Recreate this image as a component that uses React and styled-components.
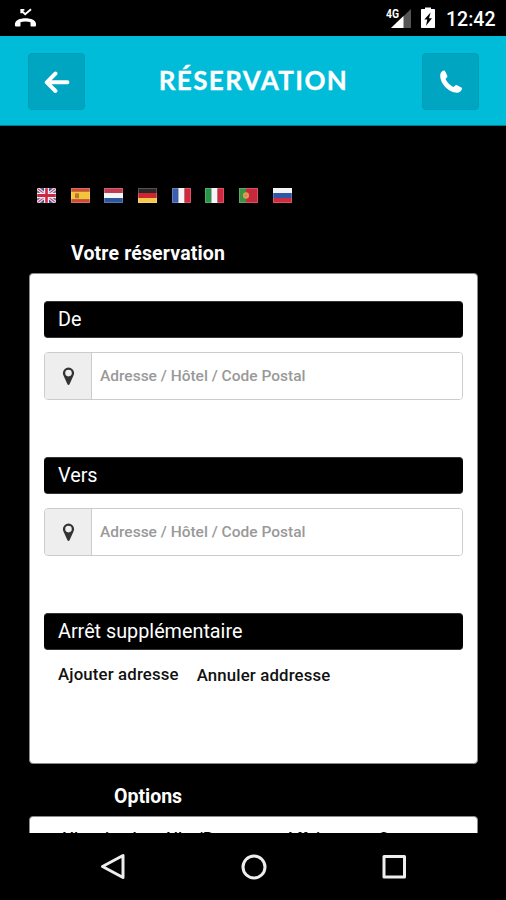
import React from 'react'
import styled, { createGlobalStyle } from 'styled-components'

const GlobalStyle = createGlobalStyle`
  * { box-sizing: border-box; }
  body { margin: 0; background: #000; font-family: Roboto, 'Liberation Sans', sans-serif; }
`

const Screen = styled.div`
  display: flex;
  flex-direction: column;
  width: 506px;
  height: 900px;
  background: #000;
  overflow: hidden;
`

const StatusBar = styled.div`
  display: flex;
  justify-content: space-between;
  height: 36px;
  padding: 0 10px 0 14px;
  color: #fff;
`

const Clock = styled.span`
  margin-left: 3px;
  font-size: 19.5px;
  font-weight: 500;
  line-height: 39px;
  width: 50px;
  white-space: nowrap;
`

const StatusIcons = styled.div`
  display: flex;
  gap: 8px;
`

const Header = styled.header`
  display: flex;
  justify-content: space-between;
  height: 90px;
  padding: 17px 27px 0 28px;
  background: #00bcd9;
  border-bottom: 1px solid #05788a;
`

const Title = styled.h1`
  margin: 0;
  color: #fff;
  font-family: Lato, sans-serif;
  font-size: 26px;
  font-weight: 700;
  line-height: 55px;
  letter-spacing: 1.4px;
  -webkit-text-stroke: 0.3px #fff;
`

const HeaderButton = styled.button`
  display: flex;
  align-items: center;
  justify-content: center;
  width: 57px;
  height: 57px;
  padding: 0;
  border: 1px solid #029db7;
  border-radius: 4px;
  background: #00a5c1;
`

const Content = styled.main`
  flex: none;
  height: 707px;
  padding: 62px 28px 0 29px;
  overflow: hidden;
`

const Flags = styled.div`
  display: flex;
  gap: 14.7px;
  height: 15px;
  padding-left: 8px;

  svg { display: block; }
`

const SectionTitle = styled.h2`
  margin: ${(p) => p.$top}px 0 0;
  padding-left: ${(p) => p.$left}px;
  height: 30px;
  color: #fff;
  font-size: 19.5px;
  font-weight: 700;
  line-height: 32px;
  letter-spacing: ${(p) => p.$spacing || 0}px;
`

const Card = styled.section`
  height: ${(p) => p.$height}px;
  margin-top: ${(p) => p.$top}px;
  padding: ${(p) => p.$pad || 27}px 14px 0 14px;
  background: #fff;
  border: 1px solid #8a8a8a;
  border-radius: 4px;
`

const Group = styled.div`
  height: 156px;
`

const Label = styled.div`
  height: 37px;
  padding-left: 14px;
  border: 1px solid #333;
  border-width: 1px 0;
  border-radius: 4px;
  background: #000;
  color: #fff;
  font-size: 19.8px;
  line-height: 35px;
`

const Field = styled.div`
  display: flex;
  height: 48px;
  margin-top: 14px;
  border: 1px solid #ccc;
  border-radius: 4px;
  overflow: hidden;
`

const Addon = styled.div`
  display: flex;
  align-items: center;
  justify-content: center;
  width: 47px;
  border-right: 1px solid #ccc;
  background: #eee;
`

const Input = styled.input`
  flex: 1;
  min-width: 0;
  padding: 0 8px;
  border: 0;
  background: #fff;
  font-family: inherit;
  font-size: 15.5px;
  font-weight: 500;

  &::placeholder { color: #999; opacity: 1; }
`

const Links = styled.div`
  display: flex;
  gap: 18px;
  padding: 12px 0 0 14px;
`

const TextLink = styled.span`
  padding-top: ${(p) => p.$drop || 0}px;
  color: #111;
  font-size: 16.8px;
  font-weight: 500;
  line-height: 24px;
  letter-spacing: 0.15px;
`

const Options = styled.div`
  display: grid;
  grid-template-columns: 104px 122px 93px 1fr;
  padding-left: 15px;
  font-size: 16.3px;
  font-weight: 500;
  line-height: 24px;
  white-space: nowrap;
`

const NavBar = styled.nav`
  display: flex;
  justify-content: center;
  gap: 112.5px;
  height: 67px;
  padding: 19px 0 0 1px;
`

const MissedCall = () => (
  <svg width="23" height="30" viewBox="0 0 23 30" fill="#fff">
    <path d="M7.3 9.500v3.800M6.400 9.900h4M7 10.300l4.200 4 5.800-5" fill="none" stroke="#fff" strokeWidth="1.900" />
    <path d="M1 25.600C.4 22.900 2 20.700 4 19.800c4.500-2 10.500-2 15 0 2 .9 3.600 3.100 3 5.800-.1.700-.6 1-1.200 1h-3.300c-.6 0-1-.4-1-1v-3.400c-3-1-7-1-10 0v3.400c0 .6-.4 1-1 1H2.200c-.6 0-1.100-.3-1.200-1z" />
  </svg>
)

const Signal = () => (
  <svg width="27" height="36" viewBox="0 0 27 36">
    <path d="M25 9v19H5z" fill="#555" />
    <path d="M17.500 16V28H5z" fill="#fff" />
    <text x="0" y="18" fill="#fff" fontSize="13" fontWeight="700" textLength="13" lengthAdjust="spacingAndGlyphs">4G</text>
  </svg>
)

const Battery = () => (
  <svg width="14" height="36" viewBox="0 0 14 36">
    <path d="M1 9h3V7.500h6V9h3c.6 0 1 .4 1 1v17c0 .6-.4 1-1 1H1c-.6 0-1-.4-1-1V10c0-.6.4-1 1-1z" fill="#fff" />
    <path d="M9.600 12.500L3.300 19.600h3L5 25.800l6-7.500H8z" fill="#000" />
  </svg>
)

const Arrow = () => (
  <svg width="26" height="24" viewBox="0 0 26 24" fill="none" stroke="#fff" strokeWidth="3.900" strokeLinecap="round" strokeLinejoin="round">
    <path d="M11.500 3.500L2.700 12.300l8.800 8.700M3.500 12.300h20" />
  </svg>
)

const Phone = () => (
  <svg width="26" height="26" viewBox="0 0 26 26" fill="#fff">
    <path d="M2.300 5.600C2.600 3.600 4 2.100 5.700 1.600c.7-.2 1.300.1 1.600.8l2 4.300c.3.7.1 1.300-.4 1.800L7.500 9.900c1.700 3.600 4.400 6.300 8 8l1.800-1.500c.5-.4 1.200-.5 1.800-.2l4.200 2.200c.7.400 1 1 .7 1.700-.7 2.200-2.700 3.700-5 3.700C10.500 23.700 1.300 14 2.300 5.600z" />
  </svg>
)

const Pin = () => (
  <svg width="13" height="19" viewBox="0 0 12 18">
    <path fillRule="evenodd" fill="#333" d="M6 .5a5.300 5.300 0 0 1 5.300 5.300c0 1.500-.6 2.600-1.200 3.700L7 16.300c-.4.900-1.600.9-2 0L1.900 9.500C1.300 8.400.7 7.300.7 5.800A5.300 5.300 0 0 1 6 .5zm0 2.200a3.100 3.100 0 1 0 0 6.200 3.100 3.100 0 0 0 0-6.200z" />
  </svg>
)

const flags = [
  { name: 'en', art: (
    <>
      <rect width="19" height="14" fill="#34478f" />
      <path d="M0 0l19 14M19 0L0 14" stroke="#e8e4ee" strokeWidth="3.200" />
      <path d="M0 0l19 14M19 0L0 14" stroke="#c8405a" strokeWidth="1" />
      <path d="M9.500 0v14M0 7h19" stroke="#f4eef2" strokeWidth="5" />
      <path d="M9.500 0v14M0 7h19" stroke="#cf2643" strokeWidth="2.600" />
    </>
  ) },
  { name: 'es', rows: ['#cf4a36', '#f4c23d', '#f4c23d', '#cf4a36'], art: (
    <>
      <rect y="3.500" width="19" height="7" fill="#f4c23d" />
      <rect x="4" y="5" width="4" height="4.500" fill="#b9762f" />
    </>
  ) },
  { name: 'nl', rows: ['#c03a50', '#f5f5f5', '#2c559b'] },
  { name: 'de', rows: ['#2b2626', '#cc2630', '#f3c84b'] },
  { name: 'fr', cols: ['#3a5fae', '#f6f6f6', '#d3263f'] },
  { name: 'it', cols: ['#259546', '#f6f6f6', '#d3263f'] },
  { name: 'pt', art: (
    <>
      <rect width="19" height="14" fill="#c8283c" />
      <rect width="7" height="14" fill="#3c9143" />
      <circle cx="7" cy="7" r="3" fill="#d7a548" />
      <circle cx="7" cy="7" r="1.400" fill="#d98080" />
    </>
  ) },
  { name: 'ru', rows: ['#f4f4f4', '#2f57a5', '#cf2a3e'] },
]

const Flag = ({ rows, cols, art }) => (
  <svg width="19" height="15" viewBox="0 0 19 14" preserveAspectRatio="none">
    {rows && rows.map((c, i) => <rect key={i} y={(i * 14) / rows.length} width="19" height={14 / rows.length} fill={c} />)}
    {cols && cols.map((c, i) => <rect key={i} x={(i * 19) / 3} width={19 / 3} height="14" fill={c} />)}
    {art}
    <rect x=".5" y=".5" width="18" height="13" fill="none" stroke="#fff" strokeOpacity=".2" />
  </svg>
)

const AddressField = () => (
  <Field>
    <Addon><Pin /></Addon>
    <Input placeholder="Adresse / Hôtel / Code Postal" />
  </Field>
)

const App = () => (
  <>
    <GlobalStyle />
    <Screen>
      <StatusBar>
        <MissedCall />
        <StatusIcons>
          <Signal />
          <Battery />
          <Clock>12:42</Clock>
        </StatusIcons>
      </StatusBar>

      <Header>
        <HeaderButton><Arrow /></HeaderButton>
        <Title>RÉSERVATION</Title>
        <HeaderButton><Phone /></HeaderButton>
      </Header>

      <Content>
        <Flags>
          {flags.map((f) => <Flag key={f.name} {...f} />)}
        </Flags>

        <SectionTitle $top={35} $left={42} $spacing={0.15}>Votre réservation</SectionTitle>
        <Card $height={491} $top={5}>
          <Group>
            <Label>De</Label>
            <AddressField />
          </Group>
          <Group>
            <Label>Vers</Label>
            <AddressField />
          </Group>
          <Group>
            <Label>Arrêt supplémentaire</Label>
            <Links>
              <TextLink>Ajouter adresse</TextLink>
              <TextLink $drop={1}>Annuler addresse</TextLink>
            </Links>
          </Group>
        </Card>

        <SectionTitle $top={17} $left={85}>Options</SectionTitle>
        <Card $height={60} $top={5} $pad={10}>
          <Options>
            <span>Aller simple</span>
            <span>Aller/Retour</span>
            <span>Affaires</span>
            <span>Groupe</span>
          </Options>
        </Card>
      </Content>

      <NavBar>
        <svg width="28" height="30" viewBox="0 0 28 30" fill="none" stroke="#eee" strokeWidth="3" strokeLinejoin="round">
          <path d="M24 3.500v22L3.500 14.500z" />
        </svg>
        <svg width="28" height="30" viewBox="0 0 28 30" fill="none" stroke="#eee" strokeWidth="3">
          <circle cx="14" cy="15" r="11" />
        </svg>
        <svg width="28" height="30" viewBox="0 0 28 30" fill="none" stroke="#eee" strokeWidth="3" strokeLinejoin="round">
          <rect x="4" y="4.500" width="20.500" height="20.500" />
        </svg>
      </NavBar>
    </Screen>
  </>
)

export default App
